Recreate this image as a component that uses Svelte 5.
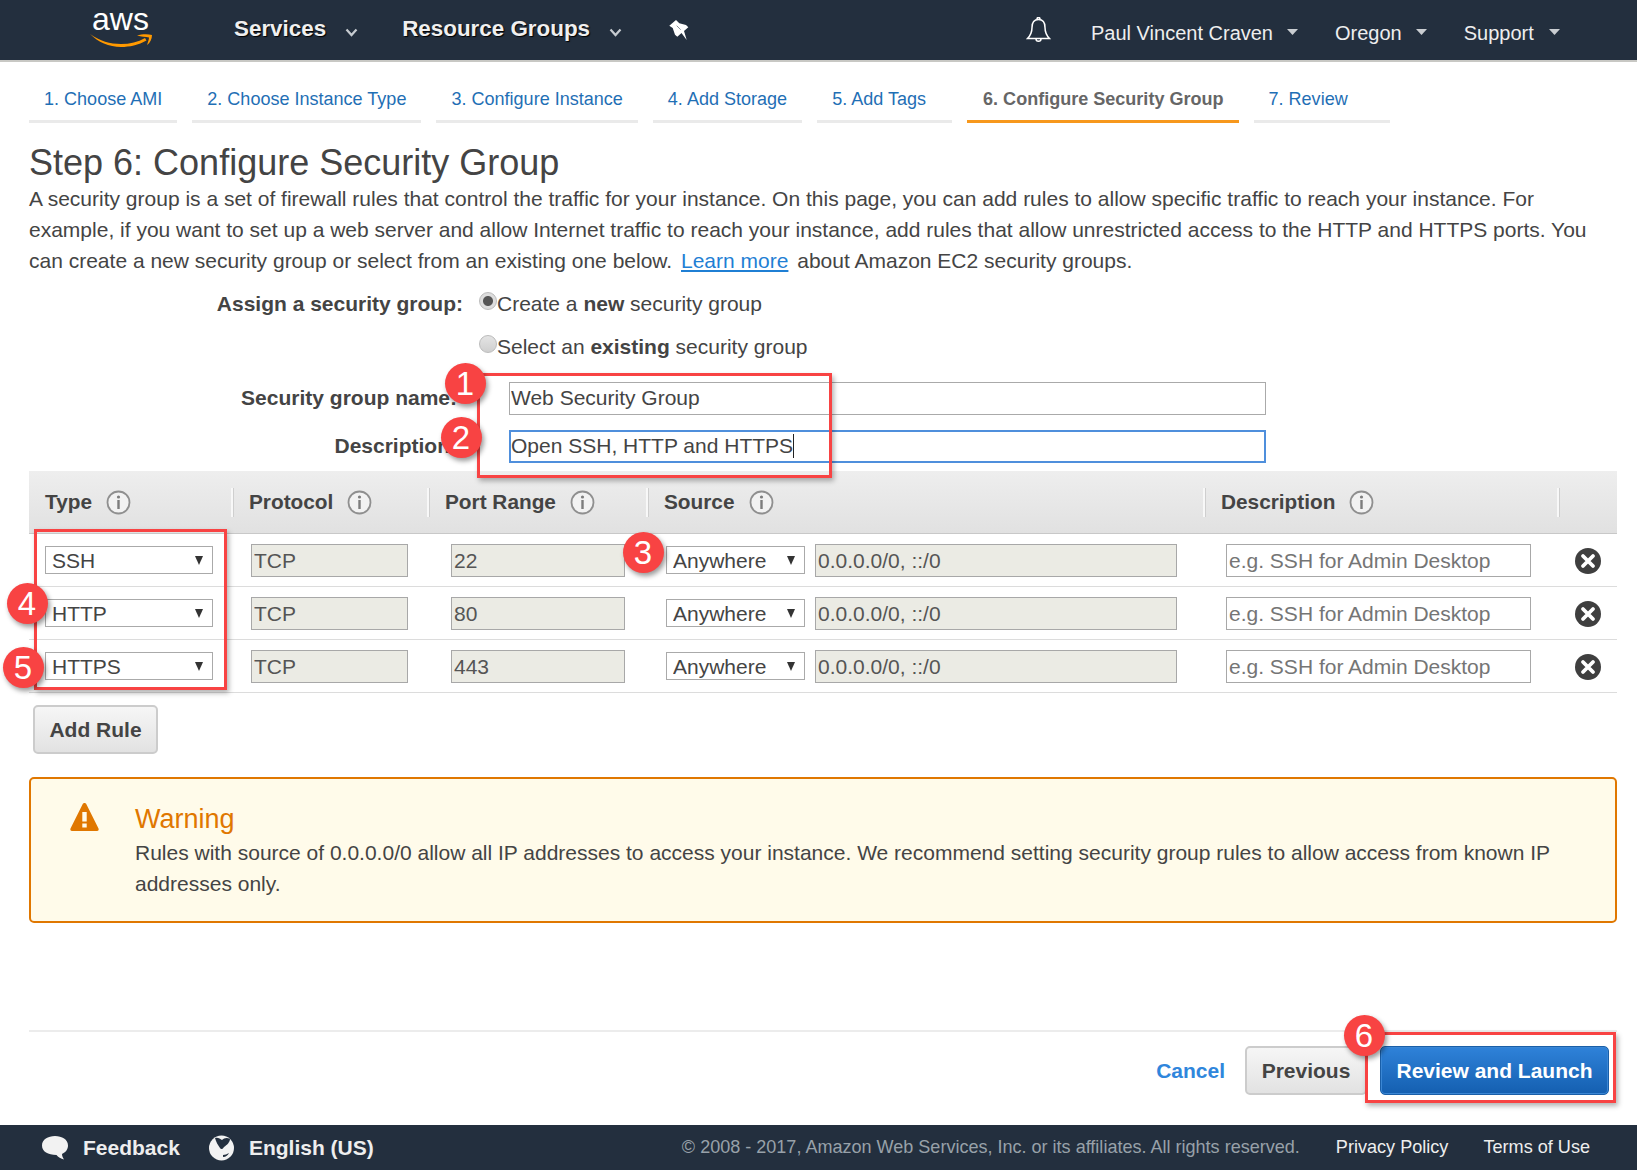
<script>
	const tabs = [
		'1. Choose AMI',
		'2. Choose Instance Type',
		'3. Configure Instance',
		'4. Add Storage',
		'5. Add Tags',
		'6. Configure Security Group',
		'7. Review'
	];
	const rules = [
		{ type: 'SSH', port: '22' },
		{ type: 'HTTP', port: '80' },
		{ type: 'HTTPS', port: '443' }
	];
	const headers = ['Type', 'Protocol', 'Port Range', 'Source', 'Description'];
	const ACTIVE_TAB = 5;
</script>

{#snippet info()}
	<svg class="info" viewBox="0 0 25 25" aria-hidden="true">
		<circle cx="12.5" cy="12.5" r="11" fill="#f2f2f2" stroke="#8f8f8f" stroke-width="1.8" />
		<circle cx="12.5" cy="7" r="1.6" fill="#7d7d7d" />
		<rect x="11.3" y="10" width="2.4" height="9" fill="#7d7d7d" />
	</svg>
{/snippet}

{#snippet caret()}
	<svg class="caret" viewBox="0 0 11 6" aria-hidden="true"><path d="M0 0h11L5.5 6z" fill="#c9cdd1" /></svg>
{/snippet}

{#snippet chevron()}
	<svg class="chevron" viewBox="0 0 13 9" aria-hidden="true">
		<path d="M1.5 1.5 6.5 7l5-5.5" fill="none" stroke="#c6cbd0" stroke-width="2.2" />
	</svg>
{/snippet}

<div class="page">
	<header class="nav">
		<div class="logo">
			<span class="aws">aws</span>
			<svg class="smile" viewBox="0 0 62 13" aria-hidden="true">
				<path d="M0 0c10 7 20 10 31 10 9 0 17-2 24-6l1.500 2.500c-8 4.500-17 6.500-25.500 6.500C19 13 8 8 0 0z" fill="#f90" />
				<path d="M47 1.500c5-1.500 11-1.500 15-.5 0 4-2 8-5 10 1-3 2-6 2-7.500-3-.5-8-1-12-2z" fill="#f90" />
			</svg>
		</div>
		<a class="menu first">Services</a>
		{@render chevron()}
		<a class="menu second">Resource Groups</a>
		{@render chevron()}
		<svg class="pin" viewBox="0 0 20 21" aria-hidden="true">
			<path d="M7 0 .3 5.700 3.700 8 6 14.700 8.300 16.700 12.500 13.100 17.700 20 15 11 19.300 7.300 17 5 10.300 3.300z" fill="#fff" />
			<path d="M7.700 5.700l4 4" stroke="#8b929a" stroke-width="1" />
		</svg>
		<svg class="bell" viewBox="0 0 25 27" aria-hidden="true">
			<path d="M12.500 2.500c-4.500 0-6.500 3.500-6.500 8 0 5-1.500 8-4.500 11h22c-3-3-4.500-6-4.500-11 0-4.500-2-8-6.500-8zM10 22c0 3 5 3 5 0M11 2c0-2 3-2 3 0" fill="none" stroke="#fff" stroke-width="1.500" />
		</svg>
		<span class="acct user">Paul Vincent Craven</span>
		{@render caret()}
		<span class="acct region">Oregon</span>
		{@render caret()}
		<span class="acct support">Support</span>
		{@render caret()}
	</header>

	<main class="main">
		<nav class="tabs">
			{#each tabs as tab, i}
				<a class="tab" class:active={i === ACTIVE_TAB}>{tab}</a>
			{/each}
		</nav>

		<h1>Step 6: Configure Security Group</h1>
		<p class="intro">
			A security group is a set of firewall rules that control the traffic for your instance. On this page, you can add rules to allow specific traffic to reach your instance. For example, if you want to set up a web server and allow Internet traffic to reach your instance, add rules that allow unrestricted access to the HTTP and HTTPS ports. You can create a new security group or select from an existing one below. <a class="learn">Learn more</a> about Amazon EC2 security groups.
		</p>

		<div class="form">
			<div class="field">
				<div class="lbl">Assign a security group:</div>
				<label class="radio"><input type="radio" name="assign" checked />Create a&nbsp;<b>new</b>&nbsp;security group</label>
			</div>
			<div class="field second-radio">
				<div class="lbl"></div>
				<label class="radio"><input type="radio" name="assign" />Select an&nbsp;<b>existing</b>&nbsp;security group</label>
			</div>
			<div class="field name">
				<div class="lbl inset">Security group name:</div>
				<input class="text" value="Web Security Group" />
			</div>
			<div class="field desc">
				<div class="lbl inset">Description:</div>
				<div class="text focus">Open SSH, HTTP and HTTPS<span class="cursor"></span></div>
			</div>
		</div>

		<section class="table">
			<div class="cols head">
				{#each headers as h}
					<div class="th">{h}{@render info()}</div>
				{/each}
				<div class="th"></div>
			</div>
			{#each rules as r}
				<div class="cols row">
					<div class="cell c1">
						<div class="sel type"><select><option>{r.type}</option></select></div>
					</div>
					<div class="cell c2"><input class="ro proto" readonly value="TCP" /></div>
					<div class="cell c3"><input class="ro port" readonly value={r.port} /></div>
					<div class="cell c4">
						<div class="sel src"><select><option>Anywhere</option></select></div>
						<input class="ro cidr" readonly value="0.0.0.0/0, ::/0" />
					</div>
					<div class="cell c5"><input class="note" placeholder="e.g. SSH for Admin Desktop" /></div>
					<div class="cell c6">
						<svg class="remove" viewBox="0 0 26 26" aria-hidden="true">
							<circle cx="13" cy="13" r="13" fill="#3f3f3f" />
							<path d="M8 8l10 10m0-10L8 18" stroke="#fff" stroke-width="3.800" stroke-linecap="round" />
						</svg>
					</div>
				</div>
			{/each}
		</section>

		<button class="btn add" type="button">Add Rule</button>

		<section class="warning">
			<svg class="warn-icon" viewBox="0 0 29 28" aria-hidden="true">
				<path d="M14.500 0c1 0 1.500.5 2 1.500l12 24c.5 1 0 2.500-1.500 2.500H2C.5 28 0 26.500.5 25.500l12-24c.5-1 1-1.500 2-1.500z" fill="#e07700" />
				<rect x="12.300" y="9" width="4.400" height="9.500" fill="#fffbea" />
				<rect x="12.300" y="20.500" width="4.400" height="4" fill="#fffbea" />
			</svg>
			<div>
				<h2>Warning</h2>
				<p>Rules with source of 0.0.0.0/0 allow all IP addresses to access your instance. We recommend setting security group rules to allow access from known IP addresses only.</p>
			</div>
		</section>

		<div class="actions">
			<a class="cancel">Cancel</a>
			<button class="btn prev" type="button">Previous</button>
			<button class="btn launch" type="button">Review and Launch</button>
		</div>
	</main>

	<footer class="foot">
		<svg class="bubble" viewBox="0 0 26 24" aria-hidden="true">
			<path d="M13 0c7 0 13 3.500 13 9.500 0 4-2.500 7-6 8.500 0 2 1 4 2 5.500-3-.5-6-2.500-7.500-4.500C6 19 0 15.500 0 9.500 0 3.500 6 0 13 0z" fill="#f2f2f2" />
		</svg>
		<span class="foot-link feedback">Feedback</span>
		<svg class="globe" viewBox="0 0 27 26" aria-hidden="true">
			<circle cx="13.500" cy="13" r="12.500" fill="#f2f2f2" />
			<path d="M7 3c3-1 5 1 7 2 2-2 5-3 8-1 0 3-3 6-6 8-1 2-3 3-4 1-2-3-4-6-5-10zM15 20c2 0 4-1 6-2-1 2-3 4-6 4z" fill="#232f3e" />
		</svg>
		<span class="foot-link lang">English (US)</span>
		<span class="copy">© 2008 - 2017, Amazon Web Services, Inc. or its affiliates. All rights reserved.</span>
		<span class="legal privacy">Privacy Policy</span>
		<span class="legal terms">Terms of Use</span>
	</footer>

	<!-- screenshot annotations, drawn over the page -->
	<div class="box box-a"></div>
	<div class="box box-b"></div>
	<div class="box box-c"></div>
	<div class="badge n1">1</div>
	<div class="badge n2">2</div>
	<div class="badge n3">3</div>
	<div class="badge n4">4</div>
	<div class="badge n5">5</div>
	<div class="badge n6">6</div>
</div>

<style>
	:global(body) {
		margin: 0;
		background: #fff;
	}
	.page {
		position: relative;
		width: 1637px;
		height: 1170px;
		display: flex;
		flex-direction: column;
		overflow: hidden;
		font-family: 'Liberation Sans', Arial, sans-serif;
		font-size: 21px;
		color: #444;
	}

	/* top bar */
	.nav {
		flex: none;
		height: 60px;
		border-bottom: 2px solid #c8c8c4;
		background: #232f3e;
		display: flex;
		align-items: center;
		color: #fff;
	}
	.logo {
		width: 58px;
		height: 40px;
		margin-left: 92px;
		position: relative;
		align-self: flex-start;
		margin-top: 1px;
	}
	.aws {
		display: block;
		font-size: 32px;
		line-height: 37px;
		color: #fff;
	}
	.smile {
		position: absolute;
		left: -2px;
		top: 33px;
		width: 62px;
		height: 13px;
	}
	.menu {
		font-weight: bold;
		font-size: 22.4px;
		color: #f0f0f0;
		text-shadow: 1px 1px 1px #000;
		margin-top: -2px;
	}
	.first {
		margin-left: 84px;
	}
	.second {
		margin-left: 44px;
	}
	.chevron {
		width: 13px;
		height: 9px;
		margin-left: 19px;
		margin-top: 4px;
		flex: none;
	}
	.pin {
		width: 20px;
		height: 21px;
		margin-left: 47px;
		flex: none;
	}
	.bell {
		width: 25px;
		height: 27px;
		margin-left: 337px;
		flex: none;
	}
	.acct {
		font-size: 20px;
		color: #eee;
		margin-top: 6px;
	}
	.user {
		margin-left: 40px;
	}
	.region {
		margin-left: 37px;
	}
	.support {
		margin-left: 37px;
	}
	.caret {
		width: 11px;
		height: 6px;
		margin-left: 14px;
		margin-top: 4px;
		flex: none;
	}
	.caret:last-child {
		margin-left: 15px;
	}

	.main {
		flex: 1;
		padding: 0 20px 0 29px;
		display: flex;
		flex-direction: column;
		align-items: stretch;
		min-height: 0;
	}

	/* wizard tabs */
	.tabs {
		display: flex;
		gap: 15px;
		height: 61px;
	}
	.tab {
		display: flex;
		align-items: center;
		box-sizing: border-box;
		height: 61px;
		padding: 16px 15px 0;
		border-bottom: 3px solid #eaeaea;
		color: #1f6fb5;
		font-size: 18.04px;
		white-space: nowrap;
	}
	.tab:nth-child(5) {
		padding-right: 26px;
	}
	.tab:nth-child(6) {
		padding-left: 16px;
	}
	.tab:last-child {
		padding-right: 42px;
	}
	.tab.active {
		border-bottom-color: #f7981d;
		color: #666;
		font-weight: bold;
	}

	h1 {
		margin: 19px 0 0;
		font-weight: normal;
		font-size: 36px;
		line-height: 41px;
		color: #444;
	}
	.intro {
		margin: 0;
		line-height: 31px;
	}
	.learn {
		color: #1f7fd4;
		text-decoration: underline;
		margin: 0 3px;
	}

	/* group form */
	.form {
		margin-top: 12px;
		display: flex;
		flex-direction: column;
	}
	.field {
		display: flex;
		align-items: center;
		min-height: 31px;
	}
	.second-radio {
		margin-top: 12px;
	}
	.name {
		margin-top: 20px;
	}
	.desc {
		margin-top: 15px;
	}
	.lbl {
		width: 434px;
		flex: none;
		font-weight: bold;
		text-align: right;
		white-space: nowrap;
	}
	.lbl.inset {
		box-sizing: border-box;
		padding: 0 6px 2px 0;
	}
	.radio {
		display: flex;
		align-items: center;
		margin-left: 16px;
		white-space: nowrap;
	}
	.radio input {
		appearance: none;
		width: 18px;
		height: 18px;
		margin: -6px 0 0;
		border-radius: 50%;
		border: 1px solid #bbb;
		background: linear-gradient(#e4e4e4, #cfcfcf);
		box-sizing: border-box;
	}
	.radio input:checked {
		background: radial-gradient(circle, #555 0 4.500px, #ddd 5.500px);
	}
	.text {
		margin-left: 46px;
		height: 33px;
		box-sizing: border-box;
		width: 757px;
		border: 1px solid #aaa;
		padding: 0 2px 2px 1px;
		font: inherit;
		color: #444;
		line-height: 29px;
		outline: none;
		background: #fff;
	}
	.focus {
		border: 2px solid #4f8fdc;
		line-height: 27px;
		padding: 0;
	}
	.cursor {
		display: inline-block;
		width: 1px;
		height: 24px;
		background: #222;
		vertical-align: -5px;
	}

	/* rules table */
	.table {
		margin-top: 8px;
	}
	.cols {
		display: grid;
		grid-template-columns: 202px 196px 219px 557px 354px 60px;
	}
	.head {
		height: 62px;
		background: linear-gradient(#eeeeee, #e1e1e1);
		border-bottom: 1px solid #c8c8c8;
		align-items: center;
	}
	.th {
		height: 29px;
		display: flex;
		align-items: center;
		font-weight: bold;
		font-size: 20.8px;
		color: #444;
		padding-left: 16px;
		box-sizing: border-box;
	}
	.th + .th {
		border-left: 2px solid #f8f8f8;
		box-shadow: inset 1px 0 0 #cfcfcf;
	}
	.info {
		width: 25px;
		height: 25px;
		margin-left: 14px;
		flex: none;
	}
	.row {
		height: 52px;
		border-bottom: 1px solid #dcdcdc;
	}
	.cell {
		display: flex;
		align-items: center;
		min-width: 0;
	}
	.c1 {
		padding-left: 16px;
	}
	.c2 {
		padding-left: 20px;
	}
	.c3 {
		padding-left: 24px;
	}
	.c4 {
		padding-left: 20px;
		gap: 10px;
	}
	.c5 {
		padding-left: 23px;
	}
	.c6 {
		padding-left: 18px;
	}
	.sel {
		position: relative;
		height: 28px;
		flex: none;
	}
	.sel::after {
		content: '';
		position: absolute;
		right: 10px;
		top: 10px;
		border-left: 4px solid transparent;
		border-right: 4px solid transparent;
		border-top: 9px solid #333;
	}
	.sel select {
		appearance: none;
		width: 100%;
		height: 100%;
		box-sizing: border-box;
		border: 1px solid #aaa;
		border-radius: 0;
		background: #fff;
		color: #444;
		font: inherit;
		padding: 0 0 0 6px;
	}
	.type {
		width: 168px;
	}
	.src {
		width: 139px;
	}
	.ro,
	.note {
		height: 33px;
		box-sizing: border-box;
		border: 1px solid #a8a8a8;
		padding: 2px 2px 0;
		font: inherit;
		color: #555;
		outline: none;
		flex: none;
	}
	.ro {
		background: #ebebe4;
	}
	.note {
		background: #fff;
		width: 305px;
	}
	.note::placeholder {
		color: #757575;
		opacity: 1;
	}
	.proto {
		width: 157px;
	}
	.port {
		width: 174px;
	}
	.cidr {
		width: 362px;
	}
	.remove {
		width: 26px;
		height: 26px;
		margin-top: 1px;
	}

	.btn {
		font-family: inherit;
		font-size: 21px;
		font-weight: bold;
		border-radius: 5px;
		box-sizing: border-box;
		height: 49px;
		padding: 0;
		cursor: pointer;
		color: #444;
		border: 2px solid #ccc;
		background: linear-gradient(#f6f6f6, #e2e2e2);
	}
	.add {
		align-self: flex-start;
		margin: 12px 0 0 4px;
		width: 125px;
	}

	/* warning */
	.warning {
		margin-top: 23px;
		height: 146px;
		box-sizing: border-box;
		border: 2px solid #e07700;
		border-radius: 5px;
		background: #fffbea;
		padding: 22px 30px 0 39px;
		display: flex;
		gap: 36px;
	}
	.warn-icon {
		width: 29px;
		height: 28px;
		margin-top: 2px;
		flex: none;
	}
	.warning h2 {
		margin: 0;
		font-weight: normal;
		font-size: 27px;
		line-height: 36px;
		color: #e07700;
	}
	.warning p {
		margin: 0;
		line-height: 31px;
	}

	.actions {
		margin-top: 107px;
		border-top: 2px solid #ececec;
		padding-top: 14px;
		display: flex;
		align-items: center;
		justify-content: flex-end;
		padding-right: 8px;
	}
	.cancel {
		color: #2f86dc;
		font-weight: bold;
		margin-right: 20px;
	}
	.prev {
		width: 122px;
		margin-right: 13px;
	}
	.launch {
		width: 229px;
		color: #fff;
		border: 1px solid #1a5fa8;
		background: linear-gradient(#2f82d9, #145fb0);
		box-shadow: inset 0 0 0 1px #3a86d4;
	}

	/* bottom bar */
	.foot {
		flex: none;
		height: 45px;
		background: #232f3e;
		display: flex;
		align-items: center;
		color: #ccc;
	}
	.bubble {
		width: 26px;
		height: 24px;
		margin-left: 42px;
		flex: none;
	}
	.foot-link {
		font-weight: bold;
		font-size: 21px;
		color: #eee;
	}
	.feedback {
		margin-left: 15px;
	}
	.globe {
		width: 27px;
		height: 26px;
		margin-left: 28px;
		flex: none;
	}
	.lang {
		margin-left: 14px;
	}
	.copy {
		margin-left: auto;
		font-size: 18.05px;
		color: #98a1a9;
	}
	.legal {
		font-size: 18.1px;
		color: #eee;
		margin-left: 35px;
	}
	.privacy {
		margin-left: 36px;
	}
	.terms {
		margin-right: 47px;
	}

	/* annotations */
	.box {
		position: absolute;
		box-sizing: border-box;
		border: 3px solid #f84343;
		box-shadow: 2px 3px 5px rgba(0, 0, 0, 0.3);
	}
	.box-a {
		left: 477px;
		top: 373px;
		width: 355px;
		height: 105px;
	}
	.box-b {
		left: 34px;
		top: 529px;
		width: 193px;
		height: 161px;
	}
	.box-c {
		left: 1365px;
		top: 1032px;
		width: 251px;
		height: 71px;
	}
	.badge {
		position: absolute;
		width: 41px;
		height: 41px;
		margin: -20.500px 0 0 -20.500px;
		border-radius: 50%;
		background: #f84343;
		color: #fff;
		font-size: 33px;
		line-height: 41px;
		text-align: center;
		box-shadow: 2px 3px 5px rgba(0, 0, 0, 0.4);
	}
	.n1 {
		left: 465px;
		top: 383px;
	}
	.n2 {
		left: 461px;
		top: 437px;
	}
	.n3 {
		left: 643px;
		top: 552px;
	}
	.n4 {
		left: 27px;
		top: 603px;
	}
	.n5 {
		left: 23px;
		top: 667px;
	}
	.n6 {
		left: 1364px;
		top: 1035px;
	}
</style>
